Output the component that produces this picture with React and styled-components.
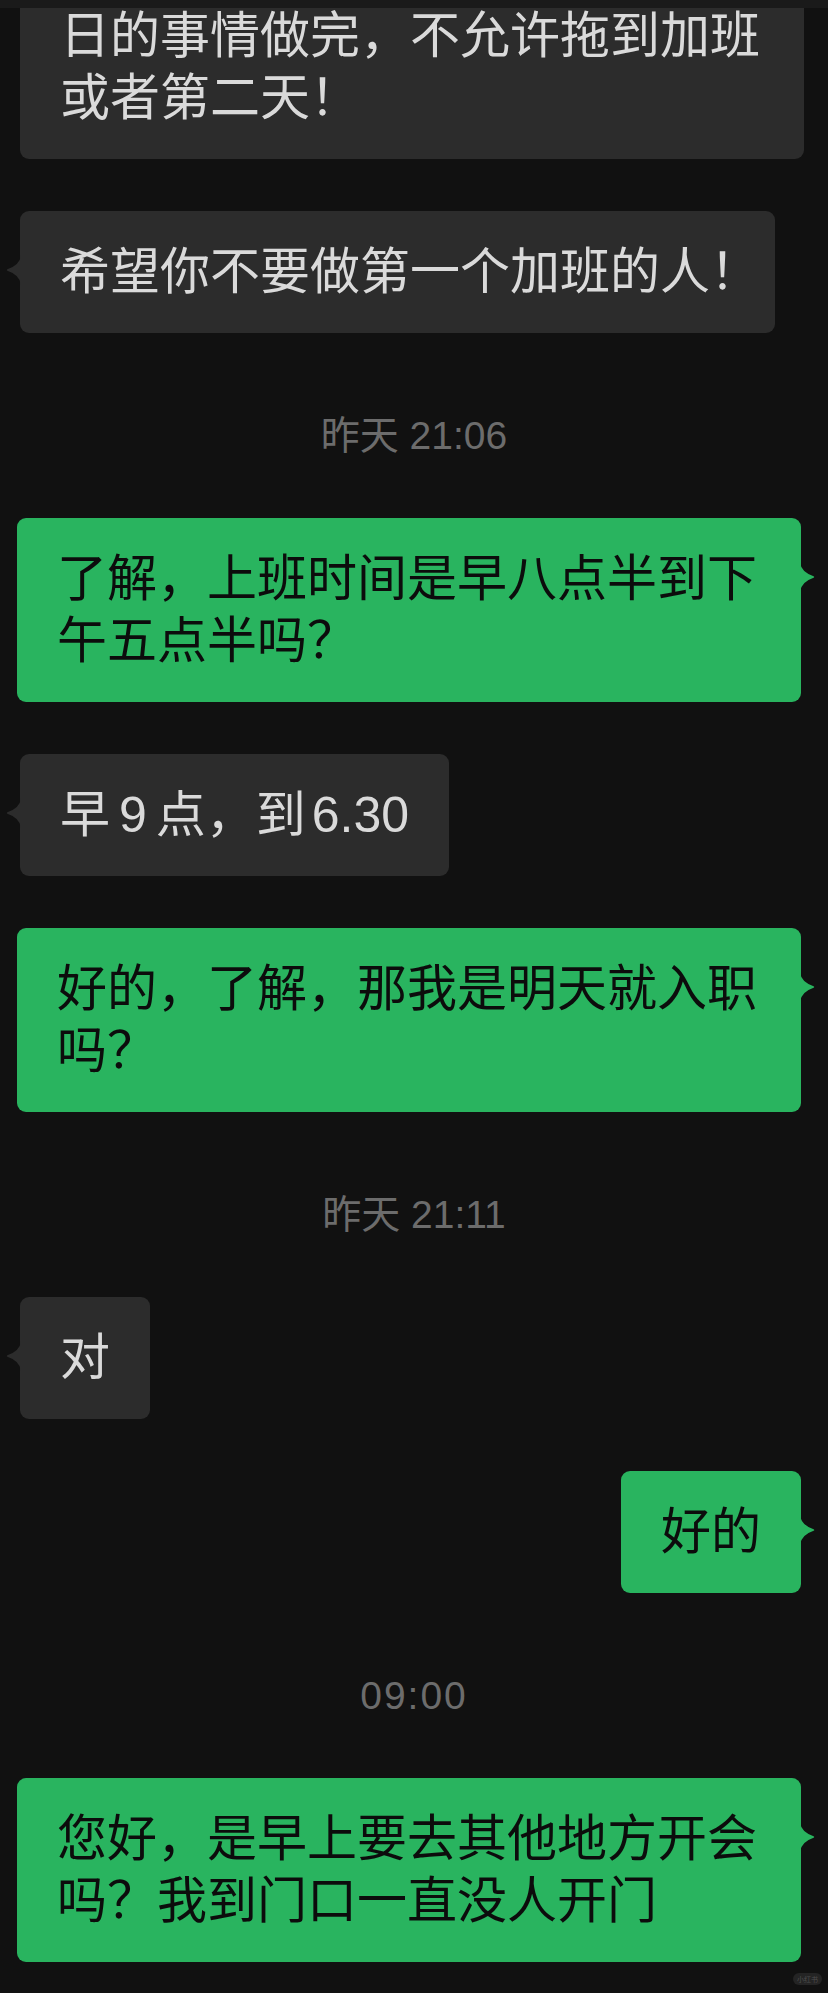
import React from 'react'
import styled, { createGlobalStyle, css } from 'styled-components'

const GlobalStyle = createGlobalStyle`
	html, body {
		margin: 0;
		padding: 0;
		background: #111111;
	}
	* {
		box-sizing: border-box;
	}
`

const FONT = `"Liberation Sans", "Noto Sans CJK SC", sans-serif`

const Screen = styled.div`
	width: 828px;
	height: 1993px;
	overflow: hidden;
	display: flex;
	flex-direction: column;
	background: #111111;
	font-family: ${FONT};
`

const TopStrip = styled.div`
	height: 8px;
	flex: none;
	background: #1a1a1a;
	position: relative;
	z-index: 2;
`

const ChatView = styled.div`
	flex: 1;
	display: flex;
	flex-direction: column;
	gap: 52px;
`

const Row = styled.div`
	display: flex;
	justify-content: ${p => (p.$mine ? 'flex-end' : 'flex-start')};
	padding: ${p => (p.$mine ? '0 27px 0 0' : '0 0 0 20px')};
	${p =>
		p.$cut &&
		css`
			margin-top: -33px;
		`}
`

const Bubble = styled.div`
	position: relative;
	max-width: 784px;
	padding: 30px 40px;
	border-radius: 9px;
	font-size: 50px;
	line-height: 62px;
	background: ${p => (p.$mine ? '#29b45f' : '#2c2c2c')};
	color: ${p => (p.$mine ? '#0c0c0c' : '#dadada')};
	word-break: break-all;

	&::before {
		content: '';
		display: ${p => (p.$noTail ? 'none' : 'block')};
		position: absolute;
		top: 44px;
		width: 15px;
		height: 30px;
		background: inherit;
		${p =>
			p.$mine
				? css`
						right: -14px;
						clip-path: path('M0 0 Q1 10 13.6 14.2 Q15 15 13.6 15.8 Q1 20 0 30 Z');
				  `
				: css`
						left: -14px;
						clip-path: path('M15 0 Q14 10 1.4 14.2 Q0 15 1.4 15.8 Q14 20 15 30 Z');
				  `}
	}
`

// half-width exclamation, the screenshot's font sets it narrow
const Bang = styled.span`
	font-feature-settings: 'halt';
`

const Num = styled.span`
	margin-left: ${p => p.$l || 0}px;
	margin-right: ${p => p.$r || 0}px;
`

const Timestamp = styled.div`
	padding: 31px 0 10px;
	text-align: center;
	font-size: 39px;
	line-height: 40px;
	color: #6c6c6c;
	letter-spacing: ${p => (p.$spaced ? '2px' : '0')};
`

const Footer = styled.div`
	display: flex;
	justify-content: flex-end;
	padding-right: 6px;
	margin-top: -41px;
`

const Watermark = styled.div`
	width: 29px;
	height: 12px;
	border-radius: 6px;
	background: #242424;
	color: #4e4e4e;
	font-family: "Noto Sans CJK SC", sans-serif;
	font-size: 7px;
	line-height: 12px;
	text-align: center;
`

const messages = [
	{ type: 'in', text: '日的事情做完，不允许拖到加班或者第二天！', cut: true },
	{ type: 'in', text: ['希望你不要做第一个加班的人', <Bang key="b">！</Bang>] },
	{ type: 'time', text: '昨天 21:06' },
	{ type: 'out', text: '了解，上班时间是早八点半到下午五点半吗？' },
	{
		type: 'in',
		text: ['早', <Num key="n1" $l={9} $r={9}>9</Num>, '点，到', <Num key="n2" $l={6}>6.30</Num>],
	},
	{ type: 'out', text: '好的，了解，那我是明天就入职吗？' },
	{ type: 'time', text: '昨天 21:11' },
	{ type: 'in', text: '对' },
	{ type: 'out', text: '好的' },
	{ type: 'time', text: '09:00', spaced: true },
	{ type: 'out', text: '您好，是早上要去其他地方开会吗？我到门口一直没人开门' },
]

export default function App() {
	return (
		<>
			<GlobalStyle />
			<Screen>
				<TopStrip />
				<ChatView>
					{messages.map((m, i) =>
						m.type === 'time' ? (
							<Timestamp key={i} $spaced={m.spaced}>
								{m.text}
							</Timestamp>
						) : (
							<Row key={i} $mine={m.type === 'out'} $cut={m.cut}>
								<Bubble $mine={m.type === 'out'} $noTail={m.cut}>
									{m.text}
								</Bubble>
							</Row>
						)
					)}
					<Footer>
						<Watermark>小红书</Watermark>
					</Footer>
				</ChatView>
			</Screen>
		</>
	)
}
